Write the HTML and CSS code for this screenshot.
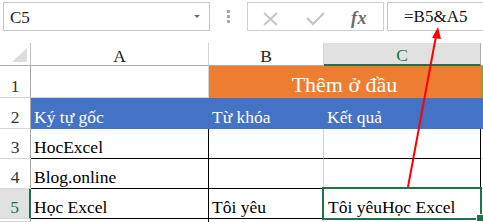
FILE: index.html
```html
<!DOCTYPE html>
<html>
<head>
<meta charset="utf-8">
<title>Excel</title>
<link rel="stylesheet" href="styles.css">
</head>
<body>
<div class="app">
  <div class="fbar">
    <div class="namebox"><span class="ref">C5</span><span class="dd"></span></div>
    <div class="dots"><i></i><i></i><i></i></div>
    <div class="btns">
      <svg class="ico-x" width="16" height="27" viewBox="0 0 16 27"><path d="M1 10 L14 22 M14 10 L1 22" stroke="#c6c6c6" stroke-width="2" fill="none"/></svg>
      <svg class="ico-ok" width="19" height="27" viewBox="0 0 19 27"><path d="M1 15 L7 21 L18 10" stroke="#c6c6c6" stroke-width="2.4" fill="none"/></svg>
      <span class="fx">fx</span>
    </div>
    <div class="formula">=B5&amp;A5</div>
  </div>
  <div class="sheet">
    <div class="c corner"><span class="tri"></span></div>
    <div class="c hd hd-a">A</div>
    <div class="c hd hd-b">B</div>
    <div class="c hd hd-c">C</div>
    <div class="c hd hd-d"></div>

    <div class="c rh">1</div>
    <div class="c a1"></div>
    <div class="c title">Thêm ở đầu</div>
    <div class="c green"></div>

    <div class="c rh">2</div>
    <div class="c blue">Ký tự gốc</div>
    <div class="c blue">Từ khóa</div>
    <div class="c blue">Kết quả</div>
    <div class="c blue"></div>

    <div class="c rh">3</div>
    <div class="c ca">HocExcel</div>
    <div class="c cb"></div>
    <div class="c cc"></div>
    <div class="c cd"></div>

    <div class="c rh">4</div>
    <div class="c ca">Blog.online</div>
    <div class="c cb"></div>
    <div class="c cc"></div>
    <div class="c cd"></div>

    <div class="c rh rh-sel">5</div>
    <div class="c ca">Học Excel</div>
    <div class="c cb">Tôi yêu</div>
    <div class="c cc c5">Tôi yêuHọc Excel</div>
    <div class="c cd"></div>

    <div class="c rh"></div>
    <div class="c e ea"></div>
    <div class="c e"></div>
    <div class="c e ec"></div>
    <div class="c e"></div>
  </div>
  <div class="sel"></div>
  <div class="handle"></div>
  <svg class="arrow" width="483" height="222" viewBox="0 0 483 222">
    <line x1="408" y1="187" x2="436" y2="36" stroke="#ff0000" stroke-width="2"/>
    <polygon points="438,27 432,38 441,39" fill="#ff0000"/>
  </svg>
</div>
</body>
</html>
```
FILE: styles.css
```css
html, body {
  margin: 0;
  padding: 0;
  background: #ffffff;
}
body {
  width: 483px;
  height: 222px;
  overflow: hidden;
  font-family: "Liberation Serif", serif;
}
.app {
  position: relative;
  width: 483px;
  height: 222px;
  overflow: hidden;
}

/* formula bar */
.fbar {
  height: 43px;
  box-sizing: border-box;
  display: flex;
  align-items: flex-start;
  padding: 2px 0 0 3px;
}
.fbar > * {
  flex: none;
}
.namebox {
  width: 207px;
  height: 29px;
  box-sizing: border-box;
  border: 1px solid #c6c6c6;
  display: flex;
  align-items: center;
  justify-content: space-between;
  padding: 0 9px 0 6px;
}
.ref {
  font-size: 17px;
  color: #222;
  line-height: 20px;
  padding-top: 2px;
}
.dd {
  width: 0;
  height: 0;
  border-left: 3px solid transparent;
  border-right: 3px solid transparent;
  border-top: 3px solid #6e6e6e;
}
.dots {
  margin-left: 17px;
  margin-top: 8px;
  display: flex;
  flex-direction: column;
  gap: 2px;
}
.dots i {
  display: block;
  width: 3px;
  height: 3px;
  background: #a8a8a8;
}
.btns {
  margin-left: 17px;
  width: 137px;
  height: 29px;
  box-sizing: border-box;
  border: 1px solid #d0d0d0;
  display: flex;
  align-items: flex-start;
}
.btns > * {
  flex: none;
}
.ico-x {
  margin-left: 15px;
}
.ico-ok {
  margin-left: 27px;
}
.fx {
  margin-left: 26px;
  margin-top: 5px;
  font-size: 18px;
  font-style: italic;
  font-weight: bold;
  color: #6a6a6a;
  line-height: 20px;
  letter-spacing: 0.5px;
}
.formula {
  margin-left: 3px;
  width: 140px;
  height: 29px;
  box-sizing: border-box;
  border: 1px solid #c6c6c6;
  padding: 3px 0 0 16px;
  font-size: 17px;
  line-height: 22px;
  color: #111;
  white-space: nowrap;
}

/* grid */
.sheet {
  display: grid;
  grid-template-columns: 31px 178px 115px 157px 2px;
  grid-template-rows: 23px 32px 31px 30px 30px 30px 3px;
}
.c {
  box-sizing: border-box;
  border-right: 1px solid #d4d4d4;
  border-bottom: 1px solid #d4d4d4;
  font-size: 17.5px;
  line-height: 20px;
  color: #000;
  display: flex;
  align-items: flex-end;
  padding: 0 3px 1px;
  white-space: nowrap;
  min-width: 0;
}
.corner {
  border-right-color: #bdbdbd;
  border-bottom-color: #ababab;
  justify-content: flex-end;
  padding: 0 3px 3px 0;
}
.tri {
  width: 0;
  height: 0;
  border-left: 15px solid transparent;
  border-bottom: 14px solid #dcdcdc;
}
.hd {
  justify-content: center;
  border-bottom-color: #ababab;
  color: #222;
  line-height: 18px;
  padding-bottom: 0;
}
.hd-b {
  border-right-color: #d4d4d4;
}
.hd-c {
  background: #e1e1e1;
  color: #217346;
  border-bottom: 2px solid #217346;
  border-right-color: #ababab;
}
.hd-d {
  border-right: none;
}
.rh {
  justify-content: center;
  border-right-color: #ababab;
  color: #333;
  padding: 0 0 1px;
}
.rh-sel {
  background: #e1e1e1;
  color: #217346;
  border-right: 2px solid #217346;
}
.title {
  grid-column: span 2;
  background: #ed7d31;
  border-color: #ed7d31;
  color: #ffffff;
  justify-content: center;
  font-size: 22px;
  line-height: 24px;
  padding-bottom: 0;
}
.green {
  background: #70ad47;
  border-color: #70ad47;
  border-right: none;
}
.blue {
  background: #4472c4;
  border-color: #4472c4;
  color: #ffffff;
}
.ca {
  border-right-color: #000;
  border-bottom-color: #000;
}
.cb {
  border-bottom-color: #000;
}
.cc {
  border-right-color: #000;
  border-bottom-color: #000;
  padding-left: 4px;
}
.cd {
  border-right: none;
}
.e {
  border-bottom: none;
}
.ea {
  border-right-color: #000;
}
.ec {
  border-right-color: #000;
}

/* overlays */
.sel {
  position: absolute;
  left: 322px;
  top: 187px;
  width: 160px;
  height: 33px;
  box-sizing: border-box;
  border: 2px solid #217346;
}
.handle {
  position: absolute;
  left: 477px;
  top: 215px;
  width: 6px;
  height: 6px;
  background: #217346;
  box-shadow: 0 0 0 1px #ffffff;
}
.arrow {
  position: absolute;
  left: 0;
  top: 0;
  pointer-events: none;
}
```
